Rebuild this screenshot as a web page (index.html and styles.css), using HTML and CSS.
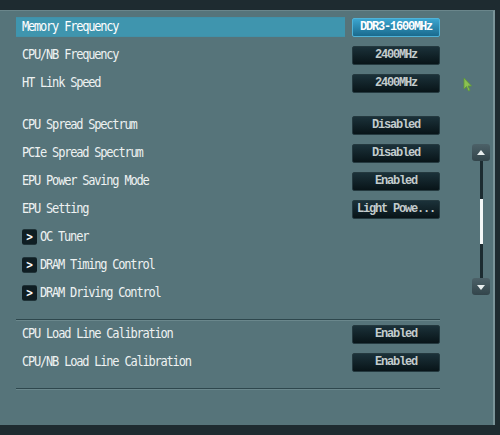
FILE: index.html
```html
<!doctype html>
<html lang="en">
    <head>
        <meta charset="UTF-8" />
        <title>Ai Tweaker</title>
        <link rel="stylesheet" href="styles.css">
    </head>
    <body>
        <div class="panel">
            <div class="list">
                <div class="row selected">
                    <span class="label">Memory Frequency</span>
                    <span class="value">DDR3-1600MHz</span>
                </div>
                <div class="row">
                    <span class="label">CPU/NB Frequency</span>
                    <span class="value">2400MHz</span>
                </div>
                <div class="row">
                    <span class="label">HT Link Speed</span>
                    <span class="value">2400MHz</span>
                </div>

                <div class="spacer"></div>

                <div class="row">
                    <span class="label">CPU Spread Spectrum</span>
                    <span class="value">Disabled</span>
                </div>
                <div class="row">
                    <span class="label">PCIe Spread Spectrum</span>
                    <span class="value">Disabled</span>
                </div>
                <div class="row">
                    <span class="label">EPU Power Saving Mode</span>
                    <span class="value">Enabled</span>
                </div>
                <div class="row">
                    <span class="label">EPU Setting</span>
                    <span class="value">Light Powe...</span>
                </div>
                <div class="row">
                    <span class="label"><span class="sub">&gt;</span>OC Tuner</span>
                </div>
                <div class="row">
                    <span class="label"><span class="sub">&gt;</span>DRAM Timing Control</span>
                </div>
                <div class="row">
                    <span class="label"><span class="sub">&gt;</span>DRAM Driving Control</span>
                </div>

                <div class="divider"></div>

                <div class="row">
                    <span class="label">CPU Load Line Calibration</span>
                    <span class="value">Enabled</span>
                </div>
                <div class="row">
                    <span class="label">CPU/NB Load Line Calibration</span>
                    <span class="value">Enabled</span>
                </div>

                <div class="divider"></div>
            </div>

            <div class="scroll">
                <div class="scroll-btn up"></div>
                <div class="track">
                    <div class="thumb"></div>
                </div>
                <div class="scroll-btn down"></div>
            </div>

            <!-- mouse pointer -->
            <svg class="cursor" width="9" height="15" viewBox="0 0 9 15">
                <path d="M1 1 L1 12 L3.5 9.5 L5.5 14 L7 13.3 L5 9 L8.5 9 Z" fill="#8cc152" stroke="#5f9a36" stroke-width="0.8" />
            </svg>
        </div>
    </body>
</html>
```

FILE: styles.css
```css
* {
    margin: 0;
    padding: 0;
    box-sizing: border-box;
}

body {
    background: #1e2b30;
    width: 500px;
    height: 435px;
    overflow: hidden;
    padding-top: 10px;
    font-family: "DejaVu Sans Mono", "Liberation Mono", monospace;
}

.panel {
    position: relative;
    display: flex;
    width: 495px;
    height: 415px;
    padding: 2px 0 0 16px;
    background: #56747a;
    border-top: 1px solid #6a868b;
    border-right: 2px solid #7a9499;
}

.list {
    width: 424px;
}

.row {
    display: flex;
    align-items: center;
    height: 28px;
}

.label {
    display: flex;
    align-items: center;
    width: 329px;
    height: 18px;
    margin-right: 7px;
    padding-left: 6px;
    color: #eef2f2;
    font-size: 12px;
    letter-spacing: -1.2px;
    transform: scaleY(1.1);
}

.row.selected .label {
    background: #3f95ae;
    color: #ffffff;
}

.sub {
    display: flex;
    align-items: center;
    justify-content: center;
    width: 15px;
    height: 14px;
    margin-right: 3px;
    border-radius: 2px;
    background: #0f1e23;
    color: #ffffff;
    font-size: 11px;
    font-weight: bold;
    letter-spacing: 0;
}

.value {
    display: flex;
    align-items: center;
    justify-content: center;
    width: 88px;
    height: 19px;
    border-radius: 2px;
    background: linear-gradient(#1b3139, #081418);
    border: 1px solid #24393f;
    color: #c3cccd;
    font-family: "Liberation Mono", monospace;
    font-size: 12px;
    font-weight: bold;
    letter-spacing: -1.2px;
}

.row.selected .value {
    background: linear-gradient(#3ba5cf, #1a6a8e);
    border-color: #4fb3d8;
    color: #ffffff;
}

.spacer {
    height: 14px;
}

.divider {
    height: 2px;
    margin-top: 12px;
    background: #2e474d;
    border-bottom: 1px solid #6a878c;
}

.divider + .row {
    margin-top: -1px;
}

.scroll {
    display: flex;
    flex-direction: column;
    align-items: center;
    width: 18px;
    margin: 131px 0 0 32px;
    align-self: flex-start;
}

.scroll-btn {
    position: relative;
    width: 18px;
    height: 17px;
    border-radius: 3px;
    background: linear-gradient(#4c6168, #33454b);
}

.scroll-btn::after {
    content: "";
    position: absolute;
    left: 5px;
    border-left: 4px solid transparent;
    border-right: 4px solid transparent;
}

.scroll-btn.up::after {
    top: 6px;
    border-bottom: 5px solid #e8eeee;
}

.scroll-btn.down::after {
    top: 7px;
    border-top: 5px solid #e8eeee;
}

.track {
    width: 3px;
    height: 117px;
    padding-top: 38px;
    background: #1c2c31;
}

.thumb {
    width: 3px;
    height: 45px;
    background: #f4f8f8;
}

.cursor {
    position: absolute;
    left: 463px;
    top: 66px;
}
```
